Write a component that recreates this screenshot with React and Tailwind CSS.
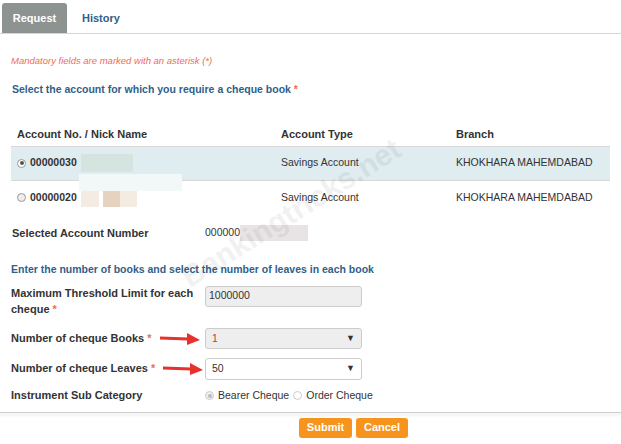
export default function App() {
  const lbl = "text-[11px] font-bold text-[#333]";
  const Arrow = () => (
    <svg width="40" height="12" viewBox="0 0 40 12" className="ml-[8px] shrink-0">
      <path d="M0 5 L28 6" stroke="#e8302c" strokeWidth="3" strokeLinecap="round" />
      <path d="M27 0 L40 7 L27 12 Z" fill="#e8302c" />
    </svg>
  );
  return (
    <div className="w-[621px] h-[444px] bg-white overflow-hidden relative" style={{ fontFamily: '"Liberation Sans", Arial, sans-serif' }}>
      <div className="flex items-end h-[34px] border-b border-[#d5d5d5] pl-[2px]">
        <div className="w-[65px] h-[30px] bg-[#8c9390] rounded-t-[3px] text-white text-[11px] font-bold flex items-center justify-center">Request</div>
        <div className="h-[30px] px-[15px] text-[11px] font-bold text-[#2f5f8a] flex items-center">History</div>
      </div>
      <div className="pl-[11px] mt-[20px] text-[9.5px] italic text-[#f26a55] h-[12px]">Mandatory fields are marked with an asterisk (*)</div>
      <div className="pl-[12px] mt-[16px] text-[10.5px] font-bold text-[#2f5f8a]">Select the account for which you require a cheque book <span className="text-[#f26a55]">*</span></div>
      <div className="mt-[28px] mx-[11px] flex h-[20px] text-[11px] font-bold text-[#333] pl-[6px]">
        <div className="w-[264px]">Account No. / Nick Name</div>
        <div className="w-[175px]">Account Type</div>
        <div>Branch</div>
      </div>
      <div className="mx-[11px] border-t border-[#d8d8d8]">
        <div className="h-[34px] bg-[#dfecf0] flex items-center pl-[6px] text-[10.5px] text-[#333] border-b border-[#d8d8d8] relative">
          <div className="w-[264px] flex items-center gap-[4px]"><span className="w-[9px] h-[9px] rounded-full border border-[#999] bg-white flex items-center justify-center"><span className="w-[4px] h-[4px] rounded-full bg-[#555]"></span></span><span className="font-bold">00000030</span><span className="w-[52px] h-[18px] bg-[#d6e4e0]"></span></div>
          <div className="w-[175px]">Savings Account</div>
          <div>KHOKHARA MAHEMDABAD</div>
          <div className="absolute left-[68px] top-[27px] w-[103px] h-[17px] bg-[#f2f7f8]"></div>
        </div>
        <div className="h-[34px] flex items-center pl-[6px] text-[10.5px] text-[#333]">
          <div className="w-[264px] flex items-center gap-[4px]"><span className="w-[9px] h-[9px] rounded-full border border-[#999] bg-[#eee]"></span><span className="font-bold">00000020</span><span className="w-[18px] h-[18px] bg-[#f4ebe3]"></span><span className="w-[17px] h-[18px] bg-[#e5d3c0]"></span><span className="w-[17px] h-[18px] bg-[#f4ebe3] -ml-[4px]"></span></div>
          <div className="w-[175px]">Savings Account</div>
          <div>KHOKHARA MAHEMDABAD</div>
        </div>
      </div>
      <div className="flex items-center mt-[11px] h-[14px] pl-[12px]">
        <div className={`${lbl} w-[193px]`}>Selected Account Number</div>
        <div className="text-[10.5px] text-[#333] flex items-center">000000<span className="w-[68px] h-[16px] bg-[#e8e4e6]"></span></div>
      </div>
      <div className="pl-[11px] mt-[22px] text-[10.5px] font-bold text-[#2f5f8a]">Enter the number of books and select the number of leaves in each book</div>
      <div className="flex mt-[7px] pl-[11px]">
        <div className={`${lbl} w-[194px] leading-[16px]`}>Maximum Threshold Limit for each<br />cheque <span className="text-[#f26a55]">*</span></div>
        <div className="w-[157px] h-[21px] bg-[#eee] border border-[#ccc] rounded-[3px] text-[10.5px] text-[#333] flex items-center pl-[3px] mt-[1px]">1000000</div>
      </div>
      <div className="flex items-center mt-[11px] pl-[11px] h-[22px]">
        <div className={`${lbl} flex items-center w-[194px] whitespace-nowrap`}>Number of cheque Books<span className="text-[#f26a55] ml-[3px]">*</span><Arrow /></div>
        <div className="w-[157px] h-[21px] bg-[#eee] border border-[#ccc] rounded-[3px] text-[10.5px] text-[#c33] flex items-center justify-between px-[6px]"><span>1</span><span className="text-[#333] text-[9px]">▼</span></div>
      </div>
      <div className="flex items-center mt-[8px] pl-[11px] h-[22px]">
        <div className={`${lbl} flex items-center w-[194px] whitespace-nowrap`}>Number of cheque Leaves<span className="text-[#f26a55] ml-[3px]">*</span><Arrow /></div>
        <div className="w-[157px] h-[22px] bg-white border border-[#ccc] rounded-[3px] text-[10.5px] text-[#333] flex items-center justify-between px-[6px]"><span>50</span><span className="text-[9px]">▼</span></div>
      </div>
      <div className="flex items-center mt-[6px] pl-[11px] h-[20px]">
        <div className={`${lbl} w-[194px]`}>Instrument Sub Category</div>
        <div className="flex items-center text-[10.5px] text-[#333] gap-[2px]">
          <span className="w-[9px] h-[9px] rounded-full border border-[#ccc] bg-[#eee] flex items-center justify-center"><span className="w-[4px] h-[4px] rounded-full bg-[#bbb]"></span></span>
          <span className="ml-[2px]">Bearer Cheque</span>
          <span className="w-[9px] h-[9px] rounded-full border border-[#ccc] bg-white ml-[2px]"></span>
          <span className="ml-[2px]">Order Cheque</span>
        </div>
      </div>
      <div className="mt-[6px] border-b border-[#ccc] shadow-[0_2px_3px_rgba(0,0,0,0.15)]"></div>
      <div className="flex gap-[4px] pl-[299px] mt-[5px]">
        <div className="w-[53px] h-[20px] bg-[#f7941d] rounded-[3px] text-white text-[11px] font-bold flex items-center justify-center">Submit</div>
        <div className="w-[52px] h-[20px] bg-[#f7941d] rounded-[3px] text-white text-[11px] font-bold flex items-center justify-center">Cancel</div>
      </div>
      <div className="absolute left-[165px] top-[190px] -rotate-[32deg] text-[30px] font-bold text-[#000] opacity-[0.05] pointer-events-none">Bankingtricks.net</div>
    </div>
  );
}
